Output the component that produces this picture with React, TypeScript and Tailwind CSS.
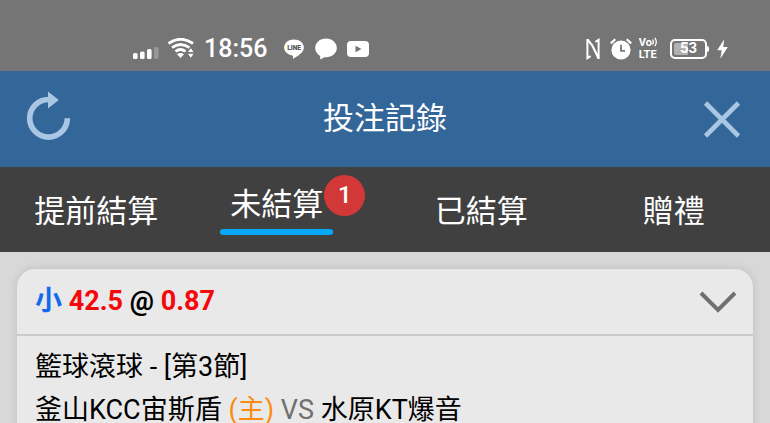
import { useState } from 'react';

type Tab = {
  id: string;
  label: string;
  count?: number;
};

const tabs: Tab[] = [
  { id: 'cashout', label: '提前結算' },
  { id: 'open', label: '未結算', count: 1 },
  { id: 'settled', label: '已結算' },
  { id: 'gift', label: '贈禮' },
];

function StatusBar() {
  return (
    <div className="flex h-[71px] shrink-0 items-center justify-between bg-[#757575] pt-[26px] pr-[42px] pl-[133px] text-white">
      <div className="flex items-center">
        <svg className="mt-2 h-[12px] w-[26px]" viewBox="0 0 26 12" fill="currentColor">
          <rect x="0" y="6" width="4.6" height="6" rx="1.5" />
          <rect x="7" y="4.5" width="4.6" height="7.5" rx="1.5" />
          <rect x="14" y="2" width="4.6" height="10" rx="1.5" />
          <rect x="21" y="0" width="4.6" height="12" rx="1.5" opacity="0.25" />
        </svg>
        <svg className="ml-2 h-[21px] w-[28px]" viewBox="0 0 28 21" fill="none" stroke="currentColor" strokeWidth="2.8">
          <path d="M1.5 5.5Q13.5-3 26 5.5" />
          <path d="M5 9.7Q13.5 3.2 22.5 9.7" />
          <path d="M8.5 13.5Q13.5 9.4 18.5 13.5" />
          <path d="M10 16.2Q13.5 13.6 17 16.2L13.5 20Z" fill="currentColor" stroke="none" />
          <path d="M21 14L23.8 10.2L26.6 14ZM21 15.8L23.8 19.8L26.6 15.8Z" fill="currentColor" stroke="none" />
        </svg>
        <span className="ml-[9px] text-[25px] leading-8 font-medium">18:56</span>
        <svg className="ml-[17px] h-[20px] w-[20px]" viewBox="0 0 20 20">
          <path
            fill="currentColor"
            d="M10 .5C4.5.5.1 4 .1 8.6c0 4 3.5 7.2 8.2 7.8.9.2.8.5.6 2.6 0 .4.2.7.8.4 3.6-1.9 10.2-5.7 10.2-10.8C19.9 4 15.5.5 10 .5Z"
          />
          <text x="10" y="11" textAnchor="middle" fontSize="6.5" fontWeight="900" fill="#555555">
            LINE
          </text>
        </svg>
        <svg className="ml-[11px] h-[22px] w-[22px]" viewBox="0 0 22 22" fill="currentColor">
          <path d="M11 .6C5 .6.2 4.8.2 10c0 3.3 2 6.2 5 7.9L5.2 21.5 9.5 19.2c.5.1 1 .1 1.5.1 6 0 10.8-4.1 10.8-9.3S17 .6 11 .6Z" />
        </svg>
        <svg className="ml-[10px] h-[16px] w-[22px]" viewBox="0 0 22 16">
          <rect width="22" height="16" rx="4" fill="currentColor" />
          <path d="M8.5 4.8L14.5 8L8.5 11.2Z" fill="#757575" />
        </svg>
      </div>
      <div className="flex items-center">
        <svg className="h-[22px] w-[14px]" viewBox="0 0 14 22" fill="none" stroke="currentColor">
          <path d="M1.4 1V20.2L4.600 18.200M12.600 21V1.800L9.400 3.800" strokeWidth="2" />
          <path d="M1.4 1.500L6 7L10 15L12.600 20.500" strokeWidth="2.200" />
        </svg>
        <svg className="ml-2.5 h-[22px] w-[22px]" viewBox="0 0 22 22" fill="none">
          <circle cx="11" cy="12" r="9.6" fill="currentColor" />
          <path d="M.8 5.4L5.3 1.3M21.2 5.4L16.7 1.3" stroke="currentColor" strokeWidth="2.2" />
          <path d="M11 6.8V12.8H15" stroke="#757575" strokeWidth="1.8" />
        </svg>
        <div className="ml-[7px] flex flex-col text-[11px] leading-3 font-bold">
          <span className="flex">
            Vo
            <svg className="h-[10px] w-[6px]" viewBox="0 0 6 10" fill="none" stroke="currentColor" strokeWidth="1.3">
              <path d="M.5 2.5Q2.2 5 .5 7.5M2.8 .8Q5.8 5 2.8 9.2" />
            </svg>
          </span>
          <span>LTE</span>
        </div>
        <div className="ml-3 flex items-center">
          <div className="flex h-[20px] w-[37px] items-center rounded-[5px] border-2 border-white p-0.5">
            <div className="flex h-full w-full items-center justify-center rounded-xs bg-linear-to-r from-[#b0b0b0] from-50% to-transparent to-50% text-[15px] leading-none font-bold">
              53
            </div>
          </div>
          <div className="h-[6px] w-[2px] rounded-r-sm bg-white" />
        </div>
        <svg className="ml-2 h-[20px] w-[11px]" viewBox="0 0 11 20" fill="currentColor">
          <path d="M7.2 .3L.2 11.2H4.7L3.3 19.7L10.9 8H6.2Z" />
        </svg>
      </div>
    </div>
  );
}

export default function App() {
  const [activeTab, setActiveTab] = useState('open');
  const [expanded, setExpanded] = useState(true);

  return (
    <div className="flex h-screen flex-col overflow-hidden bg-[#d8d8d8] font-[Roboto,'Noto_Sans_CJK_TC',sans-serif]">
      <StatusBar />

      <header className="flex h-24 shrink-0 items-center justify-between bg-[#336699] px-[26px] text-[#a9c6e4]">
        <button type="button" aria-label="重新整理" className="pb-1.5">
          <svg className="h-[50px] w-[44px]" viewBox="0 0 44 50" fill="none">
            <path d="M22.5 8.5A18.8 18.8 0 1 0 41.3 27.3" stroke="currentColor" strokeWidth="5.6" />
            <path d="M22 .5L32.8 9L22 17.5Z" fill="currentColor" />
          </svg>
        </button>
        <h1 className="text-[31px] leading-10 text-white">投注記錄</h1>
        <button type="button" aria-label="關閉">
          <svg className="h-[44px] w-[44px]" viewBox="0 0 44 44" fill="none" stroke="currentColor" strokeWidth="4.6">
            <path d="M5.5 6L38.5 39M38.5 6L5.5 39" />
          </svg>
        </button>
      </header>

      <nav className="grid h-[85px] shrink-0 grid-cols-4 bg-[#404040] text-[31px] leading-10 text-white">
        {tabs.map(tab => (
          <button
            key={tab.id}
            type="button"
            onClick={() => setActiveTab(tab.id)}
            className={`flex items-center justify-center ${tab.count ? 'pr-6' : ''} ${activeTab === tab.id ? '' : 'pt-1'}`}
          >
            <span className={`relative ${activeTab === tab.id ? 'px-2.5 pb-2.5' : ''}`}>
              {tab.label}
              {activeTab === tab.id && (
                <span className="absolute inset-x-0 bottom-0 h-1.5 rounded-full bg-[#08a8f8]" />
              )}
              {tab.count && (
                <span className="absolute -top-2.5 -right-8 flex size-[41px] items-center justify-center rounded-full bg-[#d33838] text-[24px] font-medium">
                  {tab.count}
                </span>
              )}
            </span>
          </button>
        ))}
      </nav>

      <main className="flex-1 px-[17px] pt-[17px]">
        <article className="min-h-full rounded-t-[18px] bg-[#e9e9e9] text-[27px] text-black shadow-[0_0_10px_rgba(0,0,0,0.12)]">
          <div className="flex h-[67px] items-center justify-between border-b-2 border-[#cbcbcb] pr-4 pl-[18px]">
            <h2 className="font-bold">
              <span className="text-[#1269ee]">小</span> <span className="text-[#f5080c]">42.5</span> @{' '}
              <span className="text-[#f5080c]">0.87</span>
            </h2>
            <button type="button" aria-label="展開" onClick={() => setExpanded(!expanded)}>
              <svg className="h-[24px] w-[38px]" viewBox="0 0 38 24" fill="none" stroke="#707070" strokeWidth="4">
                <path d="M2 3L19 20L36 3" />
              </svg>
            </button>
          </div>
          {expanded && (
            <div className="px-[18px] pt-2.5 leading-[43px]">
              <p>籃球滾球 - [第3節]</p>
              <p>
                釜山KCC宙斯盾 <span className="text-[#fb8c10]">(主)</span> <span className="text-[#707070]">VS</span>{' '}
                水原KT爆音
              </p>
            </div>
          )}
        </article>
      </main>
    </div>
  );
}
